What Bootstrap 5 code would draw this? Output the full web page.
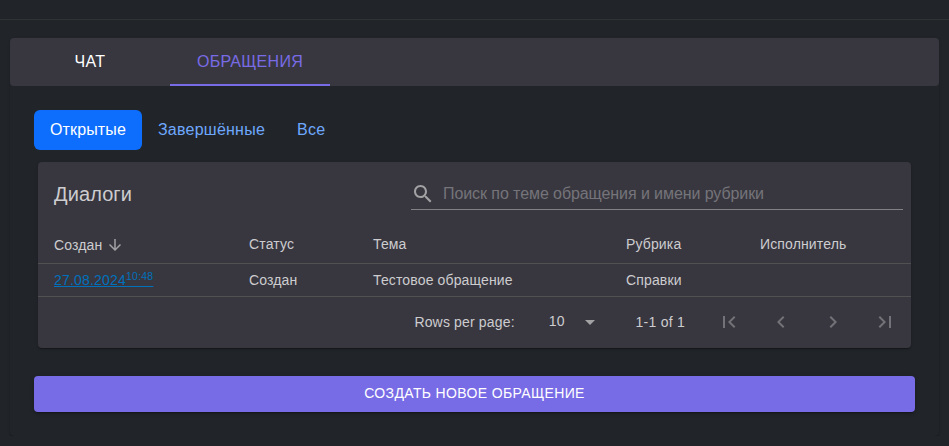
<!DOCTYPE html>
<html lang="ru" data-bs-theme="dark">
<head>
<meta charset="utf-8">
<meta name="viewport" content="width=device-width, initial-scale=1">
<title>Обращения</title>
<link href="https://cdn.jsdelivr.net/npm/bootstrap@5.3.0/dist/css/bootstrap.min.css" rel="stylesheet">
<style>
body{background:#212529;font-family:"Liberation Sans",Arial,sans-serif;overflow:hidden}
.topline{height:20px;border-bottom:1px solid #2f3334}
.panel{margin:18px 10px 0;height:398px;border-radius:4px;box-shadow:0 2px 1px -1px rgba(0,0,0,.2),0 1px 1px rgba(0,0,0,.14),0 1px 3px rgba(0,0,0,.12)}
.tabs-bar{background:#38373f;height:48px;border-radius:4px}
.tab-btn{width:160px;height:48px;border:0;background:none;color:#fff;font-size:16px;padding:2px 0 0;letter-spacing:.3px;border-bottom:2px solid transparent}
.tab-btn.current{color:#786be6;border-bottom-color:#786be6}
.panel-body{padding:24px}
.nav-pills .nav-link{border-radius:6px;color:#6ea8fe;letter-spacing:.24px}
.nav-pills .nav-link.active{background:#0d6efd;color:#fff;letter-spacing:.13px}
.dialogs{background:#38373f;color:#cdcccf;width:873px;height:186px;margin:12px 0 0 4px;border-radius:4px;box-shadow:0 2px 1px -1px rgba(0,0,0,.2),0 1px 1px rgba(0,0,0,.14),0 1px 3px rgba(0,0,0,.12)}
.dialogs-head{height:64px;padding:0 8px 0 16px}
.dialogs-title{font-size:20px;line-height:32px;font-weight:400;margin:0;color:#cdcccf;letter-spacing:.1px}
.search{width:492px;height:32px;border-bottom:1px solid #828286}
.search input{background:none;border:0;outline:0;padding:0;font-size:16px;color:#fff;letter-spacing:-.08px}
.search input::placeholder{color:#75747a;opacity:1}
svg{fill:currentColor;display:block;flex:none}
.ic{color:#a2a2a5}
.grid-table{table-layout:fixed;width:873px;margin:0;font-size:14px;border-collapse:separate;border-spacing:0;line-height:20px;letter-spacing:.14px;color:#cdcccf}
.grid-table th,.grid-table td{font-weight:400;padding:0 0 0 16px;border-bottom:1px solid #515151;vertical-align:middle}
.grid-table th{height:38px}
.grid-table th:not(:first-child){padding-bottom:2px}
.grid-table td{height:33px}
.grid-table a{color:#0071bd;text-decoration:underline;letter-spacing:.2px}
.grid-table sup{font-size:10.5px}
.c1{width:195px}.c2{width:124px}.c3{width:253px}.c4{width:134px}
.pager{height:50px;font-size:14px;padding-right:14px;letter-spacing:.16px}
.pager .label,.pager .range{padding-top:1px}
.pager .value{margin-left:34px;margin-right:13px;padding-bottom:1px}
.pager .range{margin-left:34px;margin-right:32px;letter-spacing:.24px}
.pager .steps{gap:28px;color:#737278}
.create{display:block;width:881px;height:36px;margin-top:28px;background:#786be6;color:#fff;border:0;border-radius:4px;font-size:14px;padding:0 0 2px;letter-spacing:.36px;box-shadow:0 3px 1px -2px rgba(0,0,0,.2),0 2px 2px rgba(0,0,0,.14),0 1px 5px rgba(0,0,0,.12)}
</style>
</head>
<body>
<div class="topline"></div>
<main class="panel">
  <div class="tabs-bar d-flex">
    <button class="tab-btn">ЧАТ</button>
    <button class="tab-btn current">ОБРАЩЕНИЯ</button>
  </div>
  <div class="panel-body">
    <ul class="nav nav-pills">
      <li class="nav-item"><a class="nav-link active" href="#">Открытые</a></li>
      <li class="nav-item"><a class="nav-link" href="#">Завершённые</a></li>
      <li class="nav-item"><a class="nav-link" href="#">Все</a></li>
    </ul>
    <section class="dialogs">
      <div class="dialogs-head d-flex align-items-center justify-content-between">
        <h6 class="dialogs-title">Диалоги</h6>
        <div class="search d-flex align-items-center gap-2">
          <svg class="ic" width="24" height="24" viewBox="0 0 24 24"><path d="M15.5 14h-.79l-.28-.27C15.41 12.59 16 11.11 16 9.5 16 5.91 13.09 3 9.5 3S3 5.91 3 9.5 5.91 16 9.5 16c1.61 0 3.09-.59 4.23-1.57l.27.28v.79l5 4.99L20.49 19l-4.99-5zm-6 0C7.01 14 5 11.99 5 9.5S7.01 5 9.5 5 14 7.01 14 9.5 11.99 14 9.5 14z"/></svg>
          <input class="flex-grow-1" type="text" placeholder="Поиск по теме обращения и имени рубрики">
        </div>
      </div>
      <table class="grid-table">
        <colgroup><col class="c1"><col class="c2"><col class="c3"><col class="c4"><col></colgroup>
        <thead>
          <tr>
            <th><span class="d-flex align-items-center gap-1">Создан <svg class="ic" width="18" height="18" viewBox="0 0 24 24"><path d="M20 12l-1.41-1.41L13 16.17V4h-2v12.17l-5.58-5.59L4 12l8 8 8-8z"/></svg></span></th>
            <th>Статус</th><th>Тема</th><th>Рубрика</th><th>Исполнитель</th>
          </tr>
        </thead>
        <tbody>
          <tr><td><a href="#">27.08.2024<sup>10:48</sup></a></td><td>Создан</td><td>Тестовое обращение</td><td>Справки</td><td></td></tr>
        </tbody>
      </table>
      <div class="pager d-flex align-items-center justify-content-end">
        <span class="label">Rows per page:</span>
        <span class="value">10</span>
        <svg class="ic" width="24" height="24" viewBox="0 0 24 24"><path d="M7 10l5 5 5-5z"/></svg>
        <span class="range">1-1 of 1</span>
        <div class="steps d-flex">
          <svg width="24" height="24" viewBox="0 0 24 24"><path d="M18.41 16.59L13.82 12l4.59-4.59L17 6l-6 6 6 6zM6 6h2v12H6z"/></svg>
          <svg width="24" height="24" viewBox="0 0 24 24"><path d="M15.41 7.41L14 6l-6 6 6 6 1.41-1.41L10.83 12z"/></svg>
          <svg width="24" height="24" viewBox="0 0 24 24"><path d="M10 6L8.59 7.41 13.17 12l-4.58 4.59L10 18l6-6z"/></svg>
          <svg width="24" height="24" viewBox="0 0 24 24"><path d="M5.59 7.41L10.18 12l-4.59 4.59L7 18l6-6-6-6zM16 6h2v12h-2z"/></svg>
        </div>
      </div>
    </section>
    <button class="create">СОЗДАТЬ НОВОЕ ОБРАЩЕНИЕ</button>
  </div>
</main>
<script src="https://cdn.jsdelivr.net/npm/bootstrap@5.3.0/dist/js/bootstrap.bundle.min.js"></script>
</body>
</html>
